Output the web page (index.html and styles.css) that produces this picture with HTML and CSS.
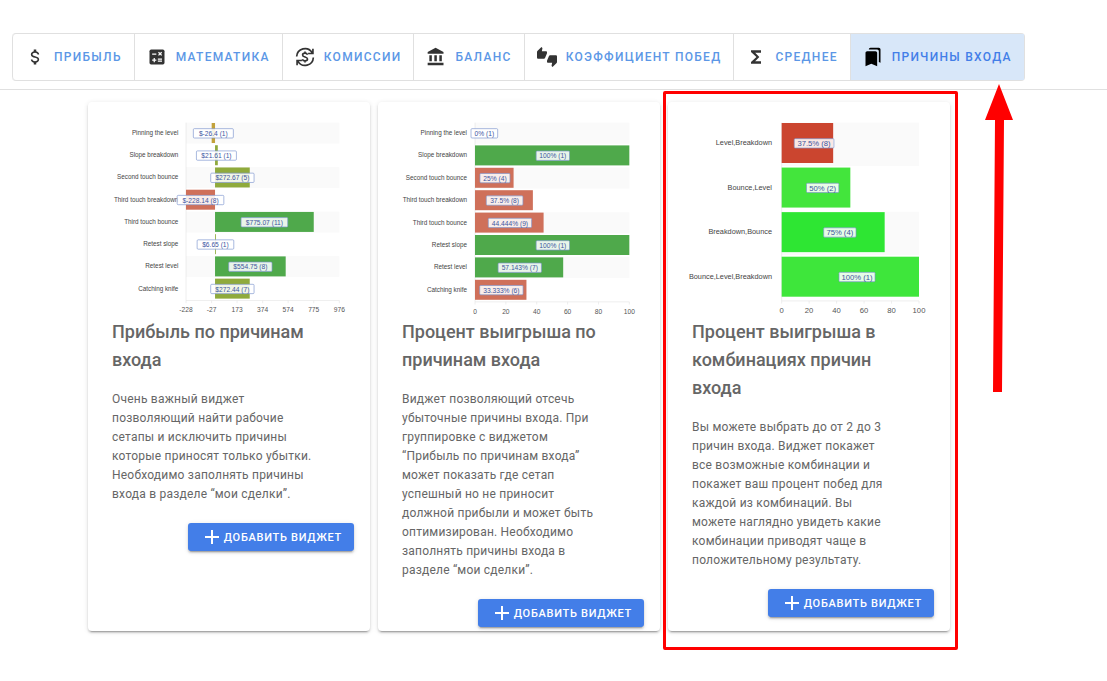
FILE: index.html
```html
<!doctype html>
<html lang="ru">
	<head>
		<meta charset="UTF-8" />
		<meta name="viewport" content="width=device-width, initial-scale=1.0" />
		<title>Виджеты</title>
		<link rel="stylesheet" href="styles.css" />
	</head>
	<body>
		<header class="toolbar">
			<nav class="tabs">
				<button type="button" class="tab">
					<svg class="icon" viewBox="0 0 24 24"><path d="M7,15H9C9,16.08 10.37,17 12,17C13.63,17 15,16.08 15,15C15,13.9 13.96,13.5 11.76,12.97C9.64,12.44 7,11.78 7,9C7,7.21 8.47,5.69 10.5,5.18V3H13.5V5.18C15.53,5.69 17,7.21 17,9H15C15,7.92 13.63,7 12,7C10.37,7 9,7.92 9,9C9,10.1 10.04,10.5 12.24,11.03C14.36,11.56 17,12.22 17,15C17,16.79 15.53,18.31 13.5,18.82V21H10.5V18.82C8.47,18.31 7,16.79 7,15Z" /></svg>
					Прибыль
				</button>
				<button type="button" class="tab">
					<svg class="icon" viewBox="0 0 24 24">
						<rect x="3" y="3" width="18" height="18" rx="2" />
						<path class="cut" d="M6.2 8.5h5M13.8 6.3l3.8 3.8M17.6 6.3l-3.8 3.8M6.2 15.8h5M8.7 13.3v5M13 14.5h5M13 17h5" />
					</svg>
					Математика
				</button>
				<button type="button" class="tab">
					<svg class="icon" viewBox="0 0 24 24">
						<path class="line" d="M2 11.500A10 10 0 0 1 20.5 6.700M22 12.500A10 10 0 0 1 3.500 17.300M21.500 2v5.800h-5.800M2.500 22v-5.800h5.800" />
						<path class="line" d="M15 9.2C14.6 8 13.5 7.3 12 7.3c-1.8 0-2.9.9-2.9 2.2 0 3.3 5.9 1.7 5.9 5 0 1.4-1.2 2.2-3 2.2-1.7 0-2.8-.8-3.2-2.1M12 5.4v2M12 16.7v2" />
					</svg>
					Комиссии
				</button>
				<button type="button" class="tab">
					<svg class="icon" viewBox="0 0 24 24"><path d="M4 10v7h3v-7H4zm6 0v7h3v-7h-3zM2 22h19v-3H2v3zm14-12v7h3v-7h-3zm-4.5-9L2 6v2h19V6l-9.5-5z" /></svg>
					Баланс
				</button>
				<button type="button" class="tab">
					<svg class="icon" viewBox="0 0 24 24"><path d="M12 6c0-.55-.45-1-1-1H5.82l.66-3.18.02-.23c0-.31-.13-.59-.33-.8L5.38 0 .44 4.94C.17 5.21 0 5.59 0 6v6.5c0 .83.67 1.5 1.5 1.5h6.75c.62 0 1.15-.38 1.38-.91l2.26-5.29c.07-.17.11-.36.11-.55V6zm10.5 4h-6.75c-.62 0-1.15.38-1.38.91l-2.26 5.29c-.07.17-.11.36-.11.55V18c0 .55.45 1 1 1h5.18l-.66 3.18-.02.24c0 .31.13.59.33.8l.79.78 4.94-4.94c.27-.27.44-.65.44-1.06v-6.5c0-.83-.67-1.5-1.5-1.5z" /></svg>
					Коэффициент побед
				</button>
				<button type="button" class="tab">
					<svg class="icon" viewBox="0 0 24 24"><path d="M18 4H6v2l6.5 6L6 18v2h12v-3h-7l5-5-5-5h7z" /></svg>
					Среднее
				</button>
				<button type="button" class="tab active">
					<svg class="icon" viewBox="0 0 24 24"><path d="M19 18l2 1V3c0-1.1-.9-2-2-2H8.99C7.89 1 7 1.9 7 3h10c1.1 0 2 .9 2 2v13zM15 5H5c-1.1 0-2 .9-2 2v16l7-3 7 3V7c0-1.1-.9-2-2-2z" /></svg>
					Причины входа
				</button>
				<svg class="arrow" viewBox="0 0 30 309"><path d="M15 0L29 36H20L18 308H9L11 36H1Z" /></svg>
			</nav>
		</header>

		<main class="cards">
			<article class="card">
				<svg class="chart" id="profitChart" viewBox="0 0 846 648"></svg>
				<h2>Прибыль по причинам входа</h2>
				<p>
					Очень важный виджет позволяющий найти рабочие сетапы и исключить причины которые приносят только убытки. Необходимо заполнять
					причины входа в разделе “мои сделки”.
				</p>
				<button type="button" class="add">
					<svg viewBox="0 0 24 24"><path d="M19 13h-6v6h-2v-6H5v-2h6V5h2v6h6z" /></svg>
					Добавить виджет
				</button>
			</article>

			<article class="card">
				<svg class="chart" id="winrateChart" viewBox="0 0 846 648"></svg>
				<h2>Процент выигрыша по причинам входа</h2>
				<p>
					Виджет позволяющий отсечь убыточные причины входа. При группировке с виджетом “Прибыль по причинам входа” может показать где сетап
					успешный но не приносит должной прибыли и может быть оптимизирован. Необходимо заполнять причины входа в разделе “мои сделки”.
				</p>
				<button type="button" class="add">
					<svg viewBox="0 0 24 24"><path d="M19 13h-6v6h-2v-6H5v-2h6V5h2v6h6z" /></svg>
					Добавить виджет
				</button>
			</article>

			<article class="card marked">
				<svg class="chart large" id="comboChart" viewBox="0 0 846 648"></svg>
				<h2>Процент выигрыша в комбинациях причин входа</h2>
				<p>
					Вы можете выбрать до от 2 до 3 причин входа. Виджет покажет все возможные комбинации и покажет ваш процент побед для каждой из
					комбинаций. Вы можете наглядно увидеть какие комбинации приводят чаще в положительному результату.
				</p>
				<button type="button" class="add">
					<svg viewBox="0 0 24 24"><path d="M19 13h-6v6h-2v-6H5v-2h6V5h2v6h6z" /></svg>
					Добавить виджет
				</button>
			</article>
		</main>

		<script>
			const GREEN = '#4fa94b';
			const RED = '#cf705a';
			const OLIVE = '#8faa3c';
			const percentTicks = [0, 20, 40, 60, 80, 100];

			// rows: название, значение, подпись, цвет, сдвиг подписи
			const charts = {
				profitChart: {
					left: 294, right: 754, labelX: 271, tickY: 624, step: 66.7, bar: 60, em: 20, shift: 0,
					ticks: [-228, -27, 173, 374, 574, 775, 976],
					rows: [
						['Pinning the level', -26.4, '$-26.4 (1)', '#c2a13b'],
						['Slope breakdown', 21.61, '$21.61 (1)', OLIVE],
						['Second touch bounce', 272.67, '$272.67 (5)', OLIVE],
						['Third touch breakdown', -228.14, '$-228.14 (8)', RED],
						['Third touch bounce', 775.07, '$775.07 (11)', GREEN],
						['Retest slope', 6.65, '$6.65 (1)', OLIVE],
						['Retest level', 554.75, '$554.75 (8)', GREEN],
						['Catching knife', 272.44, '$272.44 (7)', OLIVE],
					],
				},
				winrateChart: {
					left: 291, right: 754, labelX: 267, tickY: 628, step: 67.2, bar: 60, em: 20, shift: 2,
					ticks: percentTicks,
					rows: [
						['Pinning the level', 0, '0% (1)', RED, 28],
						['Slope breakdown', 100, '100% (1)', GREEN],
						['Second touch bounce', 25, '25% (4)', RED],
						['Third touch breakdown', 37.5, '37.5% (8)', RED],
						['Third touch bounce', 44.444, '44.444% (9)', RED],
						['Retest slope', 100, '100% (1)', GREEN],
						['Retest level', 57.143, '57.143% (7)', GREEN],
						['Catching knife', 33.333, '33.333% (6)', RED],
					],
				},
				comboChart: {
					left: 341, right: 753, labelX: 312, tickY: 625, step: 133.7, bar: 120, em: 22, shift: 20,
					ticks: percentTicks,
					rows: [
						['Level,Breakdown', 37.5, '37.5% (8)', '#cb452f'],
						['Bounce,Level', 50, '50% (2)', '#43e53c'],
						['Breakdown,Bounce', 75, '75% (4)', '#2ee633'],
						['Bounce,Level,Breakdown', 100, '100% (1)', '#3ee63b'],
					],
				},
			};

			function drawChart(id, chart) {
				const top = 62;
				const min = chart.ticks[0];
				const max = chart.ticks[chart.ticks.length - 1];
				const scale = (v) => chart.left + ((v - min) / (max - min)) * (chart.right - chart.left);
				const bottom = top + chart.step * chart.rows.length;
				let svg = '';

				chart.rows.forEach((row, i) => {
					if (i % 2) return;
					svg += `<rect class="band" x="${chart.left}" y="${top + i * chart.step}" width="${chart.right - chart.left}" height="${chart.step - 4}" />`;
				});

				svg += `<path class="axis" d="M${chart.left} ${top}V${bottom}H${chart.right}" />`;
				chart.ticks.forEach((tick) => {
					svg += `<path class="axis" d="M${scale(tick)} ${bottom}v8" />`;
					svg += `<text class="tick" x="${scale(tick)}" y="${chart.tickY + 7}">${tick}</text>`;
				});

				chart.rows.forEach(([name, value, caption, color, shift = chart.shift], i) => {
					const y = top + i * chart.step;
					const middle = y + chart.bar / 2;
					const zero = scale(0);
					const end = scale(value);
					const center = (zero + end) / 2 + shift;
					// ширина подписи по числу символов
					const width = caption.length * chart.em * 0.5 + 20;
					svg += `<text class="name" x="${chart.labelX}" y="${middle + 7}">${name}</text>`;
					svg += `<rect x="${Math.min(zero, end)}" y="${y + 1}" width="${Math.abs(end - zero)}" height="${chart.bar}" fill="${color}" />`;
					svg += `<rect class="pill" x="${center - width / 2}" y="${middle - 12}" width="${width}" height="28" rx="3" />`;
					svg += `<text class="caption" x="${center}" y="${middle + 10}">${caption}</text>`;
				});

				document.getElementById(id).innerHTML = svg;
			}

			Object.entries(charts).forEach(([id, chart]) => drawChart(id, chart));
		</script>
	</body>
</html>
```
FILE: styles.css
```css
:root {
	--primary-color: #437ee8;
	--tab-color: #5c97e6;
	--active-background: #d8e7f9;
	--text-color: #666;
	--border-color: #e0e0e0;
	--mark-color: #ff0000;
}

* {
	box-sizing: border-box;
}

body {
	margin: 0;
	font-family: Roboto, 'Liberation Sans', sans-serif;
	background-color: #fff;
	color: var(--text-color);
}

button {
	font-family: inherit;
	font-weight: 500;
	text-transform: uppercase;
	white-space: nowrap;
	cursor: pointer;
}

.toolbar {
	padding: 33px 12px 8px;
	border-bottom: 1px solid var(--border-color);
}

.tabs {
	position: relative;
	display: flex;
	width: max-content;
	border: 1px solid var(--border-color);
	border-left: none;
	border-radius: 4px;
}

.tab {
	display: flex;
	align-items: center;
	gap: 9px;
	height: 46px;
	padding: 0 12px;
	border: none;
	border-left: 1px solid var(--border-color);
	background: none;
	color: var(--tab-color);
	font-size: 12px;
	letter-spacing: 0.107em;
}

.tab:first-child {
	border-radius: 4px 0 0 4px;
}

.tab.active {
	background-color: var(--active-background);
	color: var(--primary-color);
}

.icon {
	width: 20px;
	height: 20px;
	fill: #333;
}

.active .icon {
	fill: #000;
}

.icon .cut {
	fill: none;
	stroke: #fff;
	stroke-width: 1.5;
}

.icon .line {
	fill: none;
	stroke: #333;
	stroke-width: 2;
}

/* стрелка поверх страницы, указывает на активную вкладку */
.arrow {
	position: absolute;
	top: 50px;
	right: 10px;
	z-index: 2;
	width: 30px;
	fill: var(--mark-color);
	pointer-events: none;
}

.cards {
	display: grid;
	grid-template-columns: repeat(auto-fit, minmax(260px, 1fr));
	gap: 8px;
	max-width: 862px;
	margin: 12px 88px 50px;
}

.card {
	position: relative;
	display: flex;
	flex-direction: column;
	padding-bottom: 4px;
	border-radius: 4px;
	background-color: #fff;
	box-shadow:
		0 3px 1px -2px rgba(0, 0, 0, 0.2),
		0 2px 2px 0 rgba(0, 0, 0, 0.14),
		0 1px 5px 0 rgba(0, 0, 0, 0.12);
}

.marked::after {
	content: '';
	position: absolute;
	inset: -11px -8px -19px -5px;
	border: 3px solid var(--mark-color);
	border-radius: 2px;
	pointer-events: none;
}

.card h2 {
	margin: 0 56px 16px 24px;
	font-size: 18px;
	font-weight: 500;
	line-height: 28px;
}

.card p {
	margin: 0 56px 19px 24px;
	font-size: 12px;
	line-height: 19px;
	letter-spacing: 0.018em;
}

.add {
	display: flex;
	align-items: center;
	align-self: flex-end;
	height: 28px;
	margin-right: 16px;
	padding: 0 12px;
	border: none;
	border-radius: 3px;
	background-color: var(--primary-color);
	color: #fff;
	font-size: 11px;
	letter-spacing: 0.065em;
	box-shadow:
		0 3px 1px -2px rgba(0, 0, 0, 0.2),
		0 2px 2px 0 rgba(0, 0, 0, 0.14),
		0 1px 5px 0 rgba(0, 0, 0, 0.12);
}

.add svg {
	width: 24px;
	height: 24px;
	fill: #fff;
}

.chart {
	display: block;
	width: 100%;
	font-family: 'Liberation Sans', Arial, sans-serif;
	font-size: 20px;
}

.chart .band {
	fill: #fafafa;
}

.chart .axis {
	fill: none;
	stroke: #e6e6e6;
	stroke-width: 2;
}

.chart .name {
	fill: #444;
	font-size: 19px;
	text-anchor: end;
}

.chart .tick {
	fill: #555;
	text-anchor: middle;
}

.chart .pill {
	fill: #fff;
	fill-opacity: 0.88;
	stroke: #7d95cf;
	stroke-width: 2;
}

.chart .caption {
	fill: #3c559f;
	text-anchor: middle;
}

.chart.large {
	font-size: 23px;
}

.chart.large .name {
	font-size: 22px;
}
```
